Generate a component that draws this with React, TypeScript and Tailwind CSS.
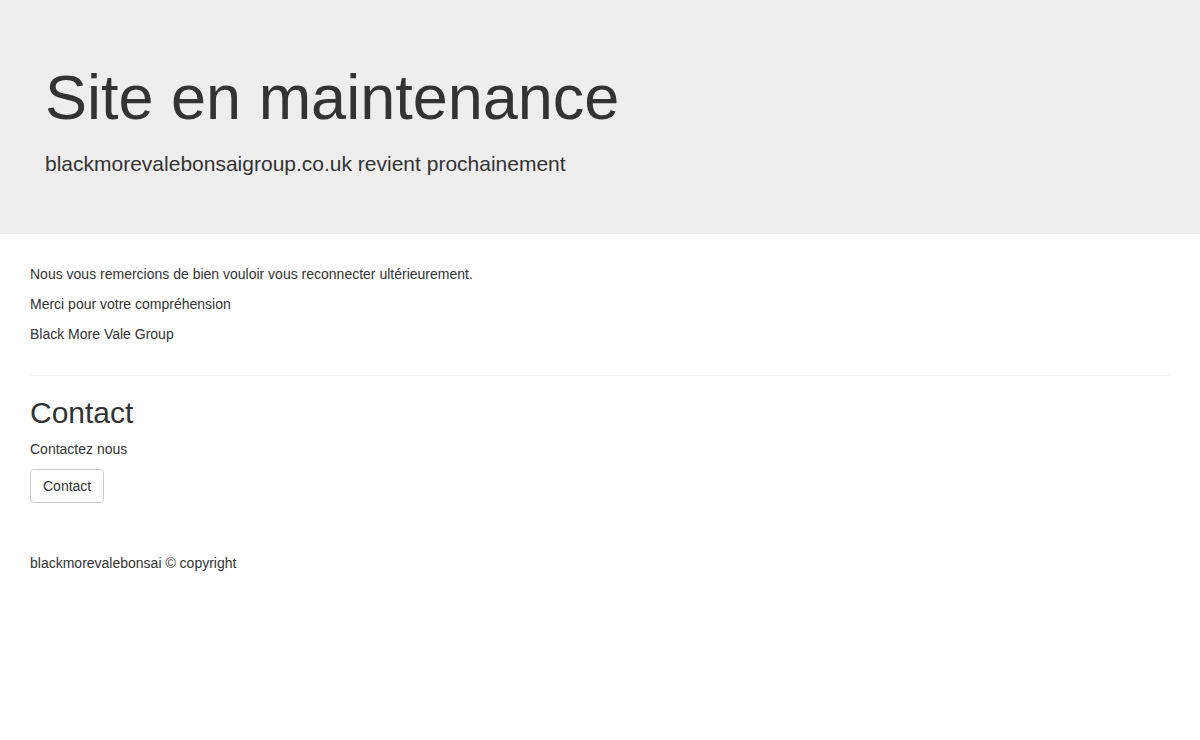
export default function App() {
  return (
    <div className="min-h-[740px] bg-white text-[#333333] font-['Liberation_Sans',Arial,sans-serif]">
      <header className="bg-[#eeeeee] pt-[62px] pb-[55px] px-[45px]">
        <h1 className="m-0 text-[63px] leading-[70px] font-normal">Site en maintenance</h1>
        <p className="mt-[17px] text-[21px] leading-[30px]">
          blackmorevalebonsaigroup.co.uk revient prochainement
        </p>
      </header>

      <main className="px-[30px] pt-[30px] text-[14px] leading-[20px]">
        <div className="flex flex-col gap-[10px]">
          <p>Nous vous remercions de bien vouloir vous reconnecter ultérieurement.</p>
          <p>Merci pour votre compréhension</p>
          <p>Black More Vale Group</p>
        </div>

        <hr className="mt-[31px] border-0 border-t border-[#eeeeee]" />

        <section className="mt-[20px]">
          <h2 className="text-[30px] leading-[33px] font-normal">Contact</h2>
          <p className="mt-[10px]">Contactez nous</p>
          <button className="mt-[10px] h-[34px] px-[12px] border border-[#cccccc] rounded-[4px] bg-white text-[14px] leading-[20px] text-[#333333]">
            Contact
          </button>
        </section>

        <footer className="mt-[50px]">
          <p>blackmorevalebonsai © copyright</p>
        </footer>
      </main>
    </div>
  );
}
